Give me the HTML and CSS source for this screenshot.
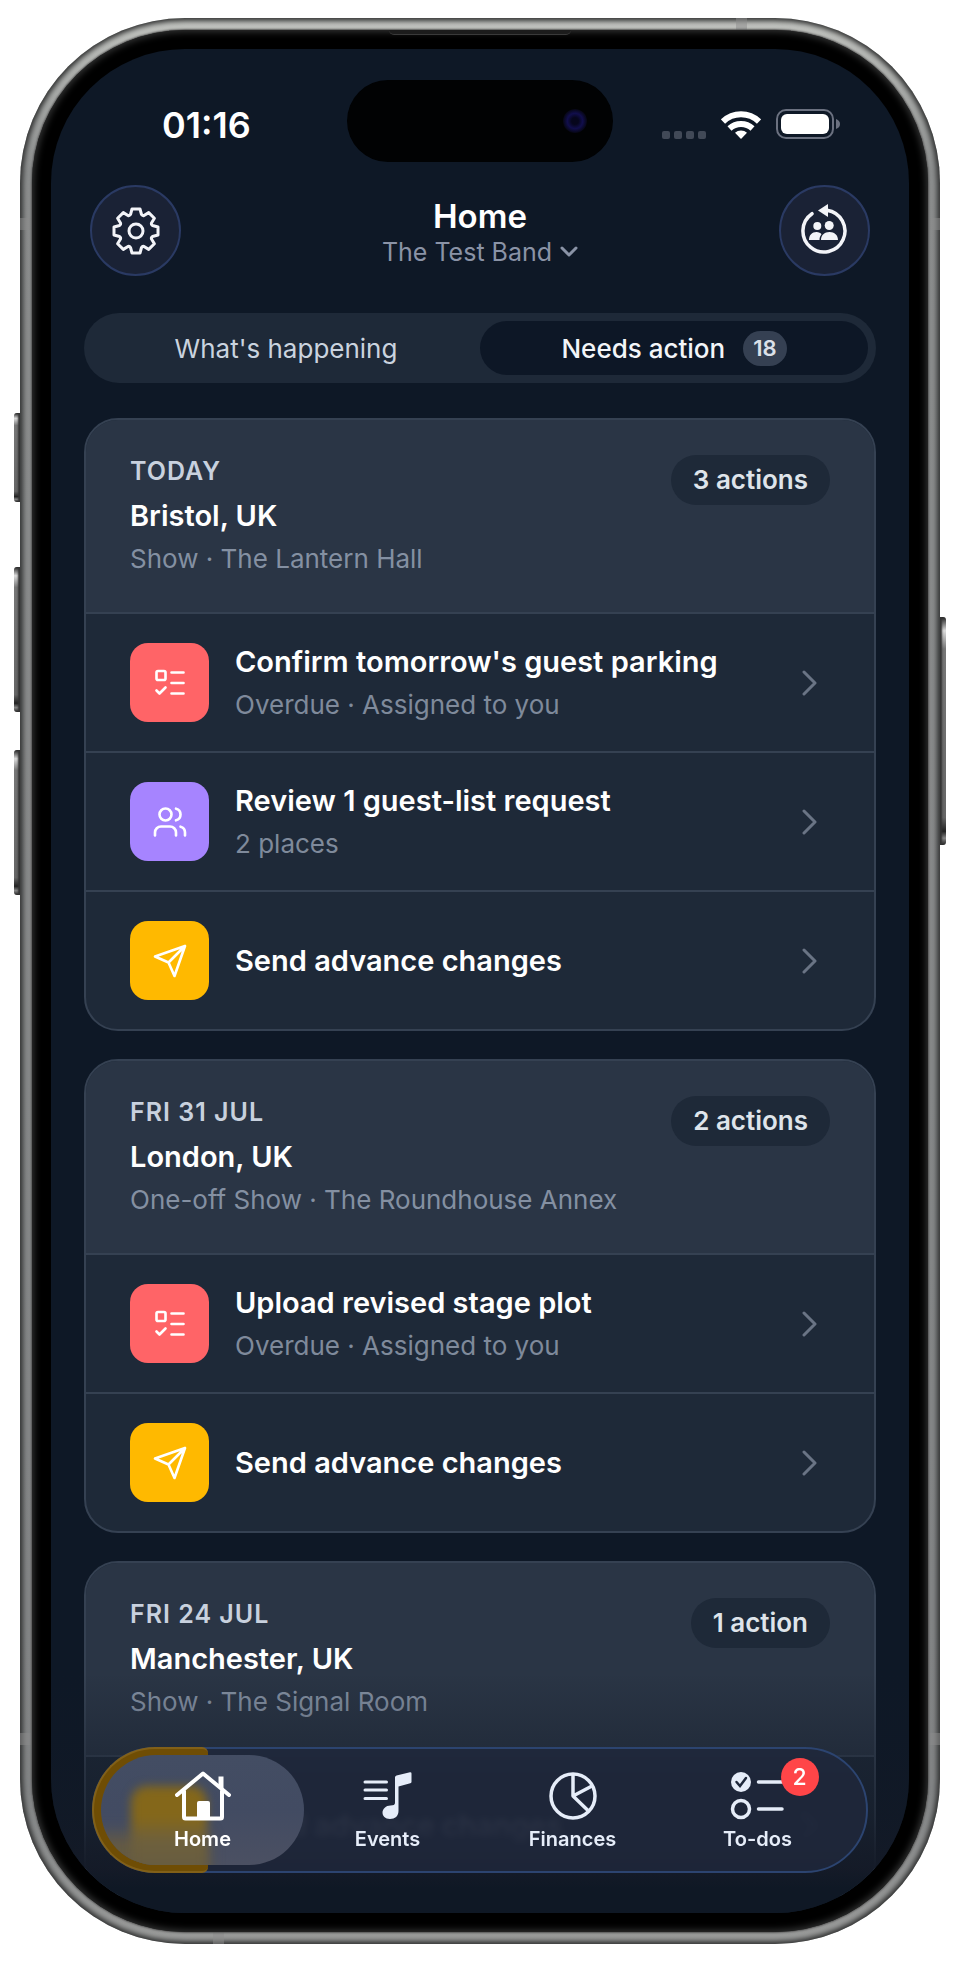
FILE: index.html
```html
<!DOCTYPE html>
<html lang="en">
<head>
    <meta charset="UTF-8">
    <meta name="viewport" content="width=device-width, initial-scale=1.0">
    <title>Home - The Test Band</title>
    <link rel="stylesheet" href="styles.css">
</head>
<body>
    <!-- Shared icons -->
    <svg class="sprite" aria-hidden="true">
        <symbol id="icon-list" viewBox="0 0 24 24">
            <rect x="3" y="4" width="6" height="6" rx="1"/>
            <path d="m3 17 2 2 4-4M13 5h8M13 12h8M13 19h8"/>
        </symbol>
        <symbol id="icon-users" viewBox="0 0 24 24">
            <path d="M16 21v-2a4 4 0 0 0-4-4H6a4 4 0 0 0-4 4v2"/>
            <circle cx="9" cy="7" r="4"/>
            <path d="M22 21v-2a4 4 0 0 0-3-3.87M16 3.13a4 4 0 0 1 0 7.75"/>
        </symbol>
        <symbol id="icon-send" viewBox="0 0 24 24">
            <path d="m22 2-7 20-4-9-9-4ZM22 2 11 13"/>
        </symbol>
        <symbol id="icon-chevron" viewBox="0 0 16 26">
            <path d="m2 2 11 11L2 24"/>
        </symbol>
    </svg>

    <div class="phone">
        <span class="side-button action"></span>
        <span class="side-button volume-up"></span>
        <span class="side-button volume-down"></span>
        <span class="side-button power"></span>
        <span class="antenna left-top"></span>
        <span class="antenna left-bottom"></span>
        <span class="antenna right-top"></span>
        <span class="antenna right-bottom"></span>
        <span class="antenna top"></span>
        <span class="antenna bottom"></span>

        <div class="bezel">
            <span class="speaker"></span>
            <div class="screen">
                <!-- Status bar -->
                <div class="status-bar">
                    <span class="time">01:16</span>
                    <span class="island"><span class="camera"></span></span>
                    <div class="status-icons">
                        <span class="signal"><i></i><i></i><i></i><i></i></span>
                        <svg class="wifi" viewBox="0 0 40 29" aria-label="Wi-Fi">
                            <path d="M2 11.5A26 26 0 0 1 38 11.5" fill="none" stroke="#fff" stroke-width="6"/>
                            <path d="M8.500 18.500A17 17 0 0 1 31.500 18.500" fill="none" stroke="#fff" stroke-width="6"/>
                            <path d="M20 29l-6-6.200a9 9 0 0 1 12 0z" fill="#fff"/>
                        </svg>
                        <svg class="battery" viewBox="0 0 64 30" aria-label="Battery">
                            <rect x="1" y="1" width="56" height="28" rx="9" fill="none" stroke="#6b7180" stroke-width="2"/>
                            <rect x="5" y="5" width="48" height="20" rx="6" fill="#fff"/>
                            <path d="M60 10c3 1 4 3 4 5s-1 4-4 5z" fill="#6b7180"/>
                        </svg>
                    </div>
                </div>

                <header class="header">
                    <button class="round-button" aria-label="Settings">
                        <svg viewBox="-25 -27 50 54" fill="none" stroke="currentColor" stroke-width="3" stroke-linejoin="round">
                            <path d="M-5.500-16.500-4-22H4L5.500-16.500Q6.500-15 8-15.500L12.700-18.400 18.400-12.700 15.500-8Q15-6.500 16.500-5.500L22-4V4L16.500 5.500Q15 6.500 15.500 8L18.400 12.700 12.700 18.400 8 15.500Q6.500 15 5.500 16.500L4 22H-4L-5.500 16.500Q-6.500 15-8 15.500L-12.700 18.400-18.400 12.700-15.500 8Q-15 6.500-16.500 5.500L-22 4V-4L-16.500-5.500Q-15-6.500-15.500-8L-18.400-12.700-12.700-18.400-8-15.500Q-6.500-15-5.500-16.500Z"/>
                            <circle r="7"/>
                        </svg>
                    </button>
                    <div class="heading">
                        <h1>Home</h1>
                        <button class="band-picker">
                            The Test Band
                            <svg viewBox="0 0 18 12" fill="none" stroke="currentColor" stroke-width="3" stroke-linecap="round" stroke-linejoin="round"><path d="m2 2 7 7 7-7"/></svg>
                        </button>
                    </div>
                    <button class="round-button" aria-label="Switch band">
                        <svg viewBox="-25 -27 50 54" fill="currentColor">
                            <path d="M3-20.800A21 21 0 1 1-12-17.300" fill="none" stroke="currentColor" stroke-width="3.500" stroke-linecap="round"/>
                            <path d="M-6-20.500 4-27V-14Z"/>
                            <circle cx="-6.700" cy="-5" r="4"/>
                            <circle cx="5.200" cy="-5.500" r="4.500"/>
                            <path d="M-15 9c0-5 3-8 7.500-8 2.500 0 4 1 5 2.200C-4 5-4.500 7-4.500 9zM-3 9c0-5 3.500-8 8.500-8S14 4 14 9z"/>
                        </svg>
                    </button>
                </header>

                <div class="tabs" role="tablist">
                    <button role="tab" aria-selected="false">What's happening</button>
                    <button role="tab" aria-selected="true" class="active">Needs action <span class="count">18</span></button>
                </div>

                <main class="feed">
                    <section class="card">
                        <div class="card-header">
                            <div>
                                <p class="date">TODAY</p>
                                <h2>Bristol, UK</h2>
                                <p class="venue">Show · The Lantern Hall</p>
                            </div>
                            <span class="pill">3 actions</span>
                        </div>
                        <a href="#" class="row">
                            <span class="tile red"><svg><use href="#icon-list"/></svg></span>
                            <span class="row-text"><strong>Confirm tomorrow's guest parking</strong><small>Overdue · Assigned to you</small></span>
                            <svg class="chevron"><use href="#icon-chevron"/></svg>
                        </a>
                        <a href="#" class="row">
                            <span class="tile purple"><svg><use href="#icon-users"/></svg></span>
                            <span class="row-text"><strong>Review 1 guest-list request</strong><small>2 places</small></span>
                            <svg class="chevron"><use href="#icon-chevron"/></svg>
                        </a>
                        <a href="#" class="row">
                            <span class="tile amber"><svg><use href="#icon-send"/></svg></span>
                            <span class="row-text"><strong>Send advance changes</strong></span>
                            <svg class="chevron"><use href="#icon-chevron"/></svg>
                        </a>
                    </section>

                    <section class="card">
                        <div class="card-header">
                            <div>
                                <p class="date">FRI 31 JUL</p>
                                <h2>London, UK</h2>
                                <p class="venue">One-off Show · The Roundhouse Annex</p>
                            </div>
                            <span class="pill">2 actions</span>
                        </div>
                        <a href="#" class="row">
                            <span class="tile red"><svg><use href="#icon-list"/></svg></span>
                            <span class="row-text"><strong>Upload revised stage plot</strong><small>Overdue · Assigned to you</small></span>
                            <svg class="chevron"><use href="#icon-chevron"/></svg>
                        </a>
                        <a href="#" class="row">
                            <span class="tile amber"><svg><use href="#icon-send"/></svg></span>
                            <span class="row-text"><strong>Send advance changes</strong></span>
                            <svg class="chevron"><use href="#icon-chevron"/></svg>
                        </a>
                    </section>

                    <section class="card">
                        <div class="card-header">
                            <div>
                                <p class="date">FRI 24 JUL</p>
                                <h2>Manchester, UK</h2>
                                <p class="venue">Show · The Signal Room</p>
                            </div>
                            <span class="pill">1 action</span>
                        </div>
                        <a href="#" class="row">
                            <span class="tile amber"><svg><use href="#icon-send"/></svg></span>
                            <span class="row-text"><strong>Send advance changes</strong></span>
                            <svg class="chevron"><use href="#icon-chevron"/></svg>
                        </a>
                    </section>
                </main>

                <div class="fade"></div>

                <!-- Floating tab bar -->
                <nav class="nav">
                    <span class="glow"></span>
                    <a href="#" class="active">
                        <span class="lens"></span>
                        <span class="nav-icon">
                            <svg viewBox="0 0 56 50" fill="none" stroke="currentColor" stroke-width="4" stroke-linecap="round" stroke-linejoin="round">
                                <path d="M2 24 28 2.500 54 24M9 20V46Q9 47.500 10.500 47.500H45.500Q47 47.500 47 46V20"/>
                                <path d="M43.500 15V5.500H48.500V19Z" fill="currentColor" stroke="none"/>
                                <path d="M22 49V32Q22 30 24 30H33Q35 30 35 32V49Z" fill="currentColor" stroke="none"/>
                            </svg>
                        </span>
                        Home
                    </a>
                    <a href="#">
                        <span class="nav-icon">
                            <svg viewBox="-3 0 56 50" fill="currentColor">
                                <path d="M2 11H23.500M2 19H23.500M2 27.500H23.500" stroke="currentColor" stroke-width="3" stroke-linecap="round"/>
                                <path d="M32 6.500Q32 5 33.500 4.500L47 1.200Q48.500 1 48.500 2.500V11Q48.500 12 47.300 12.300L35.500 15.500V40C35.500 45 32 48 27 48S19.500 45 19.500 41.500 23 34.500 27.500 34.500Q32 34.500 32 32Z"/>
                            </svg>
                        </span>
                        Events
                    </a>
                    <a href="#">
                        <span class="nav-icon">
                            <svg viewBox="-4 -1 56 50" fill="none" stroke="currentColor" stroke-width="3.500" stroke-linejoin="round">
                                <circle cx="24" cy="24" r="22"/>
                                <path d="M24 2V24L42.500 14.200M24 24 39 38.500"/>
                            </svg>
                        </span>
                        Finances
                    </a>
                    <a href="#">
                        <span class="nav-icon">
                            <svg viewBox="0 0 56 50" fill="none" stroke="currentColor" stroke-width="3.500" stroke-linecap="round">
                                <circle cx="11" cy="11" r="10" fill="currentColor" stroke="none"/>
                                <path d="m6.500 11 3.500 4 6-8" stroke="#1f283b" stroke-width="2.500"/>
                                <circle cx="11" cy="38" r="8.500"/>
                                <path d="M28.500 11H52M28.500 38H52"/>
                            </svg>
                            <span class="badge">2</span>
                        </span>
                        To-dos
                    </a>
                </nav>
            </div>
        </div>
    </div>
</body>
</html>
```

FILE: styles.css
```css
/* Resetting default styles */
* {
    margin: 0;
    padding: 0;
    box-sizing: border-box;
}

body {
    background: #fff;
    font-family: 'Inter', 'Liberation Sans', sans-serif;
    color: #fff;
    padding: 18px 20px;
}

button {
    font: inherit;
    color: inherit;
    background: none;
    border: none;
    cursor: pointer;
}

a {
    color: inherit;
    text-decoration: none;
}

svg {
    display: block;
}

.sprite {
    position: absolute;
    width: 0;
    height: 0;
}

/* Phone frame */
.phone {
    position: relative;
    padding: 12px;
    border-radius: 165px;
    background: linear-gradient(#c2c4c0, #8c8e8e 8%, #838586 92%, #9b9c9b);
    box-shadow: inset 0 0 5px 3px #333434;
}

.bezel {
    position: relative;
    padding: 19px;
    border-radius: 153px;
    background: #000;
    box-shadow: inset 0 0 7px 2px #333434, 0 0 2px 1px #555;
}

.screen {
    position: relative;
    border-radius: 134px;
    overflow: hidden;
    background: #0e1826;
    padding: 31px 33px 17px;
}

.speaker {
    position: absolute;
    top: 0;
    left: 50%;
    width: 182px;
    height: 5px;
    margin-left: -91px;
    background: #1c1c1c;
    border-bottom: 1px solid #3a3a3a;
    border-radius: 0 0 5px 5px;
}

.side-button {
    position: absolute;
    left: -6px;
    width: 6px;
    border-radius: 3px 0 0 3px;
    background: linear-gradient(#222, #ddd 6%, #777 14%, #666 88%, #222 94%, #888 97%, #222);
    box-shadow: inset -2px 0 2px #333;
}

.side-button.action {
    top: 395px;
    height: 89px;
}

.side-button.volume-up {
    top: 549px;
    height: 145px;
}

.side-button.volume-down {
    top: 732px;
    height: 145px;
}

.side-button.power {
    top: 599px;
    left: auto;
    right: -6px;
    height: 228px;
    border-radius: 0 3px 3px 0;
    box-shadow: inset 2px 0 2px #333;
}

.antenna {
    position: absolute;
    width: 11px;
    height: 12px;
    background: rgba(140, 140, 140, 0.5);
}

.antenna.left-top {
    top: 200px;
    left: 0;
}

.antenna.left-bottom {
    bottom: 199px;
    left: 0;
}

.antenna.right-top {
    top: 200px;
    right: 0;
}

.antenna.right-bottom {
    bottom: 199px;
    right: 0;
}

.antenna.top {
    top: 0;
    right: 193px;
}

.antenna.bottom {
    bottom: 0;
    left: 193px;
}

/* Status bar */
.status-bar {
    display: grid;
    grid-template-columns: 1fr 266px 1fr;
    align-items: center;
}

.time {
    padding: 8px 0 0 78px;
    font-size: 36px;
    line-height: 40px;
    font-weight: 600;
}

.island {
    display: flex;
    align-items: center;
    justify-content: flex-end;
    height: 82px;
    padding-right: 26px;
    border-radius: 41px;
    background: #010203;
}

.camera {
    width: 24px;
    height: 24px;
    border-radius: 50%;
    background: radial-gradient(circle, #06061c 20%, #110e4c 45%, #04050a 75%);
}

.status-icons {
    display: flex;
    align-items: center;
    justify-content: flex-end;
    gap: 15px;
    padding: 6px 36px 0 0;
}

.signal {
    display: flex;
    align-self: flex-end;
    gap: 4px;
}

.signal i {
    width: 8px;
    height: 8px;
    border-radius: 2px;
    background: #414957;
}

.wifi {
    width: 40px;
    height: 29px;
}

.battery {
    width: 64px;
    height: 30px;
}

/* Header */
.header {
    display: flex;
    align-items: center;
    justify-content: space-between;
    padding: 23px 6px 37px;
}

.round-button {
    display: flex;
    align-items: center;
    justify-content: center;
    width: 91px;
    height: 91px;
    border: 2px solid #2a3a63;
    border-radius: 50%;
    background: #1a2235;
    color: #f3f4f8;
}

.round-button svg {
    width: 50px;
    height: 54px;
}

.heading {
    padding-top: 4px;
    text-align: center;
}

.heading h1 {
    font-size: 33px;
    line-height: 38px;
    font-weight: 600;
}

.band-picker {
    display: flex;
    align-items: center;
    gap: 8px;
    font-size: 25px;
    line-height: 34px;
    color: #8a93a6;
}

.band-picker svg {
    width: 18px;
    height: 12px;
}

/* Tabs */
.tabs {
    display: grid;
    grid-template-columns: 1fr 1fr;
    padding: 8px;
    border-radius: 35px;
    background: #1e2938;
    margin-bottom: 35px;
}

.tabs button {
    display: flex;
    align-items: center;
    justify-content: center;
    gap: 18px;
    height: 54px;
    border-radius: 27px;
    font-size: 26px;
    color: #cad3df;
}

.tabs button.active {
    background: #0d1726;
    color: #f3f5f8;
    font-weight: 500;
}

.count {
    height: 35px;
    padding: 0 10px;
    border-radius: 18px;
    background: #354052;
    color: #dbe0e8;
    font-size: 22px;
    line-height: 35px;
    font-weight: 600;
}

/* Cards */
.feed {
    display: flex;
    flex-direction: column;
    gap: 28px;
}

.card {
    border: 2px solid #354152;
    border-radius: 34px;
    background: #1e2938;
    overflow: hidden;
}

.card-header {
    display: flex;
    align-items: flex-start;
    justify-content: space-between;
    padding: 29px 44px 33px;
    background: #2a3545;
}

.date {
    font-size: 25px;
    line-height: 44px;
    font-weight: 600;
    letter-spacing: 1px;
    color: #c8d1de;
}

.card-header h2 {
    font-size: 29px;
    line-height: 46px;
    font-weight: 600;
}

.venue {
    font-size: 26px;
    line-height: 40px;
    color: #8490a2;
}

.pill {
    margin-top: 6px;
    padding: 0 22px;
    border-radius: 25px;
    background: #1e2938;
    color: #dfe4ea;
    font-size: 26px;
    line-height: 50px;
    font-weight: 600;
}

.row {
    display: flex;
    align-items: center;
    gap: 26px;
    height: 139px;
    padding: 0 56px 0 44px;
    border-top: 2px solid #354152;
}

.tile {
    display: flex;
    align-items: center;
    justify-content: center;
    width: 79px;
    height: 79px;
    border-radius: 18px;
}

.tile svg {
    width: 36px;
    height: 36px;
    fill: none;
    stroke: #fff;
    stroke-width: 1.75px;
    stroke-linecap: round;
    stroke-linejoin: round;
}

.tile.red {
    background: #ff6467;
}

.tile.purple {
    background: #a684ff;
}

.tile.amber {
    background: #ffb900;
}

.row-text {
    flex: 1;
}

.row-text strong {
    display: block;
    font-size: 29px;
    line-height: 44px;
    font-weight: 600;
}

.row-text small {
    display: block;
    font-size: 26px;
    line-height: 42px;
    color: #7f8a9b;
}

.chevron {
    width: 16px;
    height: 26px;
    fill: none;
    stroke: #6a7485;
    stroke-width: 3px;
    stroke-linecap: round;
    stroke-linejoin: round;
}

/* Feed fades out behind the tab bar */
.fade {
    position: absolute;
    left: 0;
    right: 0;
    bottom: 0;
    height: 240px;
    background: linear-gradient(rgba(18, 25, 38, 0), rgba(18, 25, 38, 0.3) 30%, rgba(19, 26, 39, 0.6) 60%, rgba(20, 26, 39, 0.97) 82%, #0f1825 90%);
}

/* Tab bar */
.nav {
    position: absolute;
    left: 41px;
    right: 41px;
    bottom: 40px;
    display: grid;
    grid-template-columns: repeat(4, 1fr);
    padding: 0 16px;
    border: 2px solid #2c4470;
    border-radius: 63px;
    background: rgba(31, 40, 59, 0.86);
    backdrop-filter: blur(3px);
}

.nav a {
    position: relative;
    display: flex;
    flex-direction: column;
    align-items: center;
    gap: 4px;
    padding: 22px 0 18px;
    color: #e6edf9;
    font-size: 20px;
    line-height: 28px;
    font-weight: 600;
}

.nav a.active {
    z-index: 1;
    color: #fff;
}

.nav-icon {
    position: relative;
}

.nav-icon svg {
    width: 56px;
    height: 50px;
}

/* Glass highlight behind the active tab */
.lens {
    position: absolute;
    z-index: -1;
    inset: 6px -9px;
    border-radius: 56px;
    overflow: hidden;
    background: linear-gradient(#434d63, #424b62 50%, #4b5062);
}

/* Amber tile seen through the glass */
.lens::before {
    content: '';
    position: absolute;
    left: -10px;
    top: 80px;
    width: 116px;
    height: 50px;
    background: #645a43;
    filter: blur(8px);
}

.lens::after {
    content: '';
    position: absolute;
    left: 30px;
    top: 31px;
    width: 76px;
    height: 90px;
    border-radius: 16px 16px 0 0;
    background: linear-gradient(#84671a 35%, #6e603c 60%, #655b42);
    filter: blur(5px);
}

.glow {
    position: absolute;
    top: -2px;
    bottom: -2px;
    left: -2px;
    width: 116px;
    border-radius: 63px 6px 6px 63px;
    background: #6f4d04;
    border: 2px solid #826018;
    border-right: none;
}

.badge {
    position: absolute;
    left: 51px;
    top: -13px;
    width: 38px;
    height: 38px;
    border-radius: 50%;
    background: #ff4548;
    color: #fff;
    font-size: 23px;
    line-height: 38px;
    font-weight: 500;
    text-align: center;
}
```
